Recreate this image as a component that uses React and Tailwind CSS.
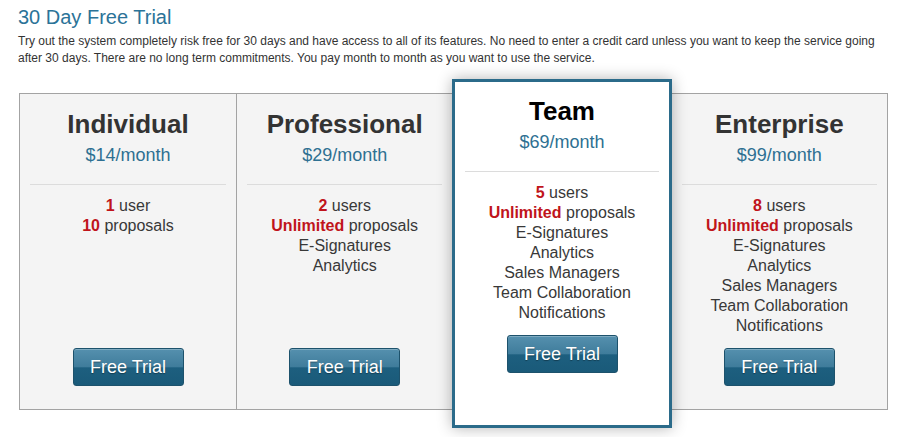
import React from "react";

const plans = [
  {
    name: "Individual",
    price: "$14/month",
    features: [
      [["1", true], [" user", false]],
      [["10", true], [" proposals", false]],
    ],
  },
  {
    name: "Professional",
    price: "$29/month",
    features: [
      [["2", true], [" users", false]],
      [["Unlimited", true], [" proposals", false]],
      [["E-Signatures", false]],
      [["Analytics", false]],
    ],
  },
  {
    name: "Team",
    price: "$69/month",
    featured: true,
    features: [
      [["5", true], [" users", false]],
      [["Unlimited", true], [" proposals", false]],
      [["E-Signatures", false]],
      [["Analytics", false]],
      [["Sales Managers", false]],
      [["Team Collaboration", false]],
      [["Notifications", false]],
    ],
  },
  {
    name: "Enterprise",
    price: "$99/month",
    features: [
      [["8", true], [" users", false]],
      [["Unlimited", true], [" proposals", false]],
      [["E-Signatures", false]],
      [["Analytics", false]],
      [["Sales Managers", false]],
      [["Team Collaboration", false]],
      [["Notifications", false]],
    ],
  },
];

const FreeTrialButton = () => (
  <button className="w-[111px] h-[38px] rounded-[3px] border border-[#1d526c] bg-[linear-gradient(to_bottom,#5590ae_0%,#3f7c9b_50%,#1d5f7f_52%,#1a5a79_100%)] text-white text-[18px] leading-none [text-shadow:0_1px_1px_rgba(0,0,0,0.35)] shadow-[inset_0_1px_0_rgba(255,255,255,0.25)] cursor-pointer">
    Free Trial
  </button>
);

const PlanColumn = ({ plan }) => {
  const { name, price, features, featured } = plan;
  return (
    <div
      className={
        featured
          ? "relative z-10 w-[220px] -mt-[15px] -mb-[19px] bg-white border-[3px] border-[#2b6b8a] shadow-[0_0_14px_rgba(0,0,0,0.3)] flex flex-col items-center pt-[14px] px-[10px]"
          : "w-[216px] bg-[#f4f4f4] flex flex-col items-center pt-[15px] pb-[23px] px-[10px]"
      }
    >
      <h3
        className={`text-[26px] leading-[30px] font-bold ${
          featured ? "text-black" : "text-[#333]"
        }`}
      >
        {name}
      </h3>
      <div className="text-[18px] leading-[22px] text-[#2e7092] mt-[5px]">
        {price}
      </div>
      <div className="w-full h-px bg-[#dcdcdc] mt-[18px]" />
      <ul className="mt-[11px] text-[16px] leading-[20px] text-[#383838] text-center">
        {features.map((f, i) => (
          <li key={i}>
            {f.map(([t, strong], j) =>
              strong ? (
                <span key={j} className="font-bold text-[#c0141b]">
                  {t}
                </span>
              ) : (
                <span key={j}>{t}</span>
              )
            )}
          </li>
        ))}
      </ul>
      <div className={featured ? "mt-[12px]" : "mt-auto"}>
        <FreeTrialButton />
      </div>
    </div>
  );
};

export default function App() {
  return (
    <div className="w-[912px] h-[437px] bg-white font-['Liberation_Sans',Arial,sans-serif] overflow-hidden">
      <div className="pl-[18px] pt-[5px]">
        <h2 className="text-[20px] leading-[24px] text-[#2b7398]">
          30 Day Free Trial
        </h2>
        <p className="text-[12px] leading-[17px] text-[#333] mt-[4px]">
          Try out the system completely risk free for 30 days and have access to all of its features. No need to enter a credit card unless you want to keep the service going
          <br />
          after 30 days. There are no long term commitments. You pay month to month as you want to use the service.
        </p>
      </div>

      <div className="ml-[19px] mt-[26px] w-[869px] h-[317px] border border-[#a3a3a3] bg-[#f4f4f4] flex">
        <div className="border-r border-[#a3a3a3] flex">
          <PlanColumn plan={plans[0]} />
        </div>
        <PlanColumn plan={plans[1]} />
        <PlanColumn plan={plans[2]} />
        <PlanColumn plan={plans[3]} />
      </div>
    </div>
  );
}
